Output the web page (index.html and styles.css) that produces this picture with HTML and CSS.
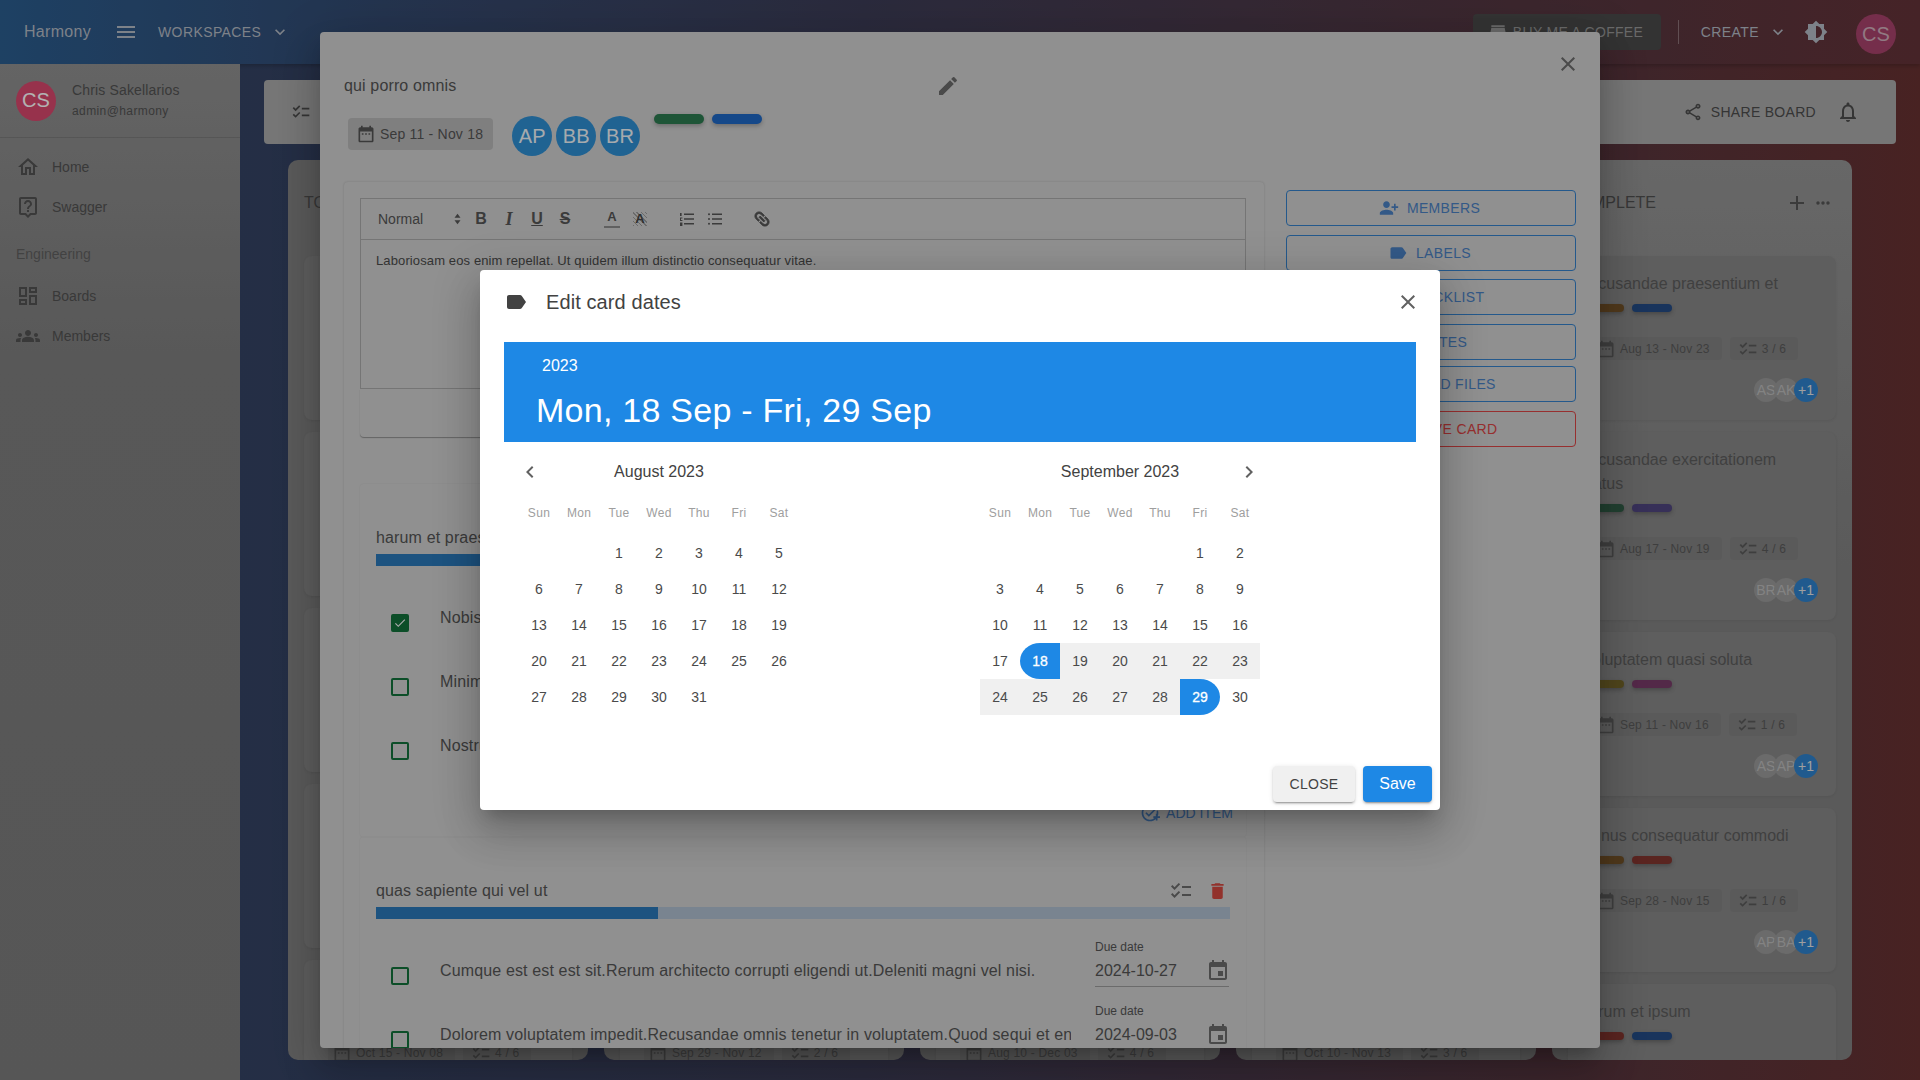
FILE: index.html
```html
<!DOCTYPE html>
<html lang="en">
<head>
    <meta charset="UTF-8">
    <title>Harmony</title>
    <link rel="stylesheet" href="styles.css">
</head>
<body>
    <!-- Shared icons -->
    <svg class="sprite" xmlns="http://www.w3.org/2000/svg">
        <symbol id="i-close" viewBox="0 0 24 24"><path d="M19 6.41 17.59 5 12 10.59 6.41 5 5 6.41 10.59 12 5 17.59 6.41 19 12 13.41 17.59 19 19 17.59 13.41 12z"/></symbol>
        <symbol id="i-menu" viewBox="0 0 24 24"><path d="M3 18h18v-2H3v2zm0-5h18v-2H3v2zm0-7v2h18V6H3z"/></symbol>
        <symbol id="i-down" viewBox="0 0 24 24"><path d="M16.59 8.59 12 13.17 7.41 8.59 6 10l6 6 6-6z"/></symbol>
        <symbol id="i-left" viewBox="0 0 24 24"><path d="M15.41 7.41 14 6l-6 6 6 6 1.41-1.41L10.83 12z"/></symbol>
        <symbol id="i-right" viewBox="0 0 24 24"><path d="M10 6 8.59 7.41 13.17 12l-4.58 4.59L10 18l6-6z"/></symbol>
        <symbol id="i-label" viewBox="0 0 24 24"><path d="M17.63 5.84C17.27 5.33 16.67 5 16 5L5 5.01C3.9 5.01 3 5.9 3 7v10c0 1.1.9 1.99 2 1.99L16 19c.67 0 1.27-.33 1.63-.84L22 12l-4.37-6.16z"/></symbol>
        <symbol id="i-edit" viewBox="0 0 24 24"><path d="M3 17.25V21h3.75L17.81 9.94l-3.75-3.75L3 17.25zM20.71 7.04c.39-.39.39-1.02 0-1.41l-2.34-2.34a.9959.9959 0 0 0-1.41 0l-1.83 1.83 3.75 3.75 1.83-1.83z"/></symbol>
        <symbol id="i-range" viewBox="0 0 24 24"><path d="M9 11H7v2h2v-2zm4 0h-2v2h2v-2zm4 0h-2v2h2v-2zm2-7h-1V2h-2v2H8V2H6v2H5c-1.11 0-1.99.9-1.99 2L3 20c0 1.1.89 2 2 2h14c1.1 0 2-.9 2-2V6c0-1.1-.9-2-2-2zm0 16H5V9h14v11z"/></symbol>
        <symbol id="i-event" viewBox="0 0 24 24"><path d="M17 12h-5v5h5v-5zM16 1v2H8V1H6v2H5c-1.11 0-1.99.9-1.99 2L3 19c0 1.1.89 2 2 2h14c1.1 0 2-.9 2-2V5c0-1.1-.9-2-2-2h-1V1h-2zm3 18H5V8h14v11z"/></symbol>
        <symbol id="i-checklist" viewBox="0 0 24 24"><path d="M22 7h-9v2h9V7zm0 8h-9v2h9v-2zM5.54 11 2 7.46l1.41-1.41 2.12 2.12 4.24-4.24 1.41 1.41L5.54 11zm0 8L2 15.46l1.41-1.41 2.12 2.12 4.24-4.24 1.41 1.41L5.54 19z"/></symbol>
        <symbol id="i-delete" viewBox="0 0 24 24"><path d="M6 19c0 1.1.9 2 2 2h8c1.1 0 2-.9 2-2V7H6v12zM19 4h-3.5l-1-1h-5l-1 1H5v2h14V4z"/></symbol>
        <symbol id="i-home" viewBox="0 0 24 24"><path d="M12 5.69l5 4.5V18h-2v-6H9v6H7v-7.81l5-4.5M12 3 2 12h3v8h6v-6h2v6h6v-8h3L12 3z"/></symbol>
        <symbol id="i-help" viewBox="0 0 24 24"><path d="M19 2H5c-1.11 0-2 .9-2 2v14c0 1.1.89 2 2 2h4l3 3 3-3h4c1.1 0 2-.9 2-2V4c0-1.1-.9-2-2-2zm0 16h-4.83l-.59.59L12 20.17l-1.59-1.59-.58-.58H5V4h14v14zm-8-3h2v2h-2zm1-8c1.1 0 2 .9 2 2 0 2-3 1.75-3 5h2c0-2.25 3-2.5 3-5 0-2.21-1.79-4-4-4S8 6.79 8 9h2c0-1.1.9-2 2-2z"/></symbol>
        <symbol id="i-boards" viewBox="0 0 24 24"><path d="M19 5v2h-4V5h4M9 5v6H5V5h4m10 8v6h-4v-6h4M9 17v2H5v-2h4M21 3h-8v6h8V3zM11 3H3v10h8V3zm10 8h-8v10h8V11zm-10 4H3v6h8v-6z"/></symbol>
        <symbol id="i-groups" viewBox="0 0 24 24"><path d="M12 12.75c1.63 0 3.07.39 4.24.9 1.08.48 1.76 1.56 1.76 2.73V18H6v-1.61c0-1.18.68-2.26 1.76-2.73 1.17-.52 2.61-.91 4.24-.91zM4 13c1.1 0 2-.9 2-2s-.9-2-2-2-2 .9-2 2 .9 2 2 2zm1.13 1.1c-.37-.06-.74-.1-1.13-.1-.99 0-1.93.21-2.78.58C.48 14.9 0 15.62 0 16.43V18h4.5v-1.61c0-.83.23-1.61.63-2.29zM20 13c1.1 0 2-.9 2-2s-.9-2-2-2-2 .9-2 2 .9 2 2 2zm4 3.43c0-.81-.48-1.53-1.22-1.85-.85-.37-1.79-.58-2.78-.58-.39 0-.76.04-1.13.1.4.68.63 1.46.63 2.29V18H24v-1.57zM12 6c1.66 0 3 1.34 3 3s-1.34 3-3 3-3-1.34-3-3 1.34-3 3-3z"/></symbol>
        <symbol id="i-brightness" viewBox="0 0 24 24"><path d="M20 15.31 23.31 12 20 8.69V4h-4.69L12 .69 8.69 4H4v4.69L.69 12 4 15.31V20h4.69L12 23.31 15.31 20H20v-4.69zM12 18V6c3.31 0 6 2.69 6 6s-2.69 6-6 6z"/></symbol>
        <symbol id="i-store" viewBox="0 0 24 24"><path d="M20 4H4v2h16V4zm1 10v-2l-1-5H4l-1 5v2h1v6h10v-6h4v6h2v-6h1zm-9 4H6v-4h6v4z"/></symbol>
        <symbol id="i-share" viewBox="0 0 24 24"><path d="M18 16.08c-.76 0-1.44.3-1.96.77L8.91 12.7c.05-.23.09-.46.09-.7s-.04-.47-.09-.7l7.05-4.11c.54.5 1.25.81 2.04.81 1.66 0 3-1.34 3-3s-1.34-3-3-3-3 1.34-3 3c0 .24.04.47.09.7L8.04 9.81C7.5 9.31 6.79 9 6 9c-1.66 0-3 1.34-3 3s1.34 3 3 3c.79 0 1.5-.31 2.04-.81l7.12 4.16c-.05.21-.08.43-.08.65 0 1.61 1.31 2.92 2.92 2.92s2.92-1.31 2.92-2.92c0-1.61-1.31-2.92-2.92-2.92zM18 4c.55 0 1 .45 1 1s-.45 1-1 1-1-.45-1-1 .45-1 1-1zM6 13c-.55 0-1-.45-1-1s.45-1 1-1 1 .45 1 1-.45 1-1 1zm12 7.02c-.55 0-1-.45-1-1s.45-1 1-1 1 .45 1 1-.45 1-1 1z"/></symbol>
        <symbol id="i-bell" viewBox="0 0 24 24"><path d="M12 22c1.1 0 2-.9 2-2h-4c0 1.1.9 2 2 2zm6-6v-5c0-3.07-1.63-5.64-4.5-6.32V4c0-.83-.67-1.5-1.5-1.5s-1.5.67-1.5 1.5v.68C7.64 5.36 6 7.92 6 11v5l-2 2v1h16v-1l-2-2zm-2 1H8v-6c0-2.48 1.51-4.5 4-4.5s4 2.02 4 4.5v6z"/></symbol>
        <symbol id="i-plus" viewBox="0 0 24 24"><path d="M19 13h-6v6h-2v-6H5v-2h6V5h2v6h6v2z"/></symbol>
        <symbol id="i-more" viewBox="0 0 24 24"><path d="M6 10c-1.1 0-2 .9-2 2s.9 2 2 2 2-.9 2-2-.9-2-2-2zm12 0c-1.1 0-2 .9-2 2s.9 2 2 2 2-.9 2-2-.9-2-2-2zm-6 0c-1.1 0-2 .9-2 2s.9 2 2 2 2-.9 2-2-.9-2-2-2z"/></symbol>
        <symbol id="i-person-add" viewBox="0 0 24 24"><path transform="matrix(-1 0 0 1 24 0)" d="M15 12c2.21 0 4-1.79 4-4s-1.79-4-4-4-4 1.79-4 4 1.79 4 4 4zm-9-2V7H4v3H1v2h3v3h2v-3h3v-2H6zm9 4c-2.67 0-8 1.34-8 4v2h16v-2c0-2.66-5.33-4-8-4z"/></symbol>
        <symbol id="i-add-task" viewBox="0 0 24 24"><path d="M22 5.18 10.59 16.6l-4.24-4.24 1.41-1.41 2.83 2.83 10-10L22 5.18zm-2.21 5.04c.13.57.21 1.17.21 1.78 0 4.42-3.58 8-8 8s-8-3.58-8-8 3.58-8 8-8c1.58 0 3.04.46 4.28 1.25l1.44-1.44C16.1 2.67 14.13 2 12 2 6.48 2 2 6.48 2 12s4.48 10 10 10 10-4.48 10-10c0-1.19-.22-2.33-.6-3.39l-1.61 1.61zM19 16h-3v2h3v3h2v-3h3v-2h-3v-3h-2v3z"/></symbol>
        <symbol id="i-tick" viewBox="0 0 24 24"><path d="M9 16.17 4.83 12l-1.42 1.41L9 19 21 7l-1.41-1.41z"/></symbol>
    </svg>

    <div class="app">
        <!-- Top bar -->
        <header class="topbar">
            <span class="brand">Harmony</span>
            <svg class="icon topbar-menu"><use href="#i-menu"/></svg>
            <span class="topbar-link">Workspaces</span>
            <svg class="icon icon-sm topbar-caret"><use href="#i-down"/></svg>
            <div class="topbar-right">
                <div class="coffee">
                    <svg class="icon icon-sm"><use href="#i-store"/></svg>
                    <span>Buy me a coffee</span>
                </div>
                <span class="topbar-divider"></span>
                <span class="topbar-link">Create</span>
                <svg class="icon icon-sm topbar-caret"><use href="#i-down"/></svg>
                <svg class="icon topbar-theme"><use href="#i-brightness"/></svg>
                <span class="avatar avatar-user avatar-user-dim">CS</span>
            </div>
        </header>

        <div class="layout">
            <!-- Sidebar -->
            <aside class="sidebar">
                <div class="user">
                    <span class="avatar avatar-user">CS</span>
                    <div>
                        <div class="user-name">Chris Sakellarios</div>
                        <div class="user-mail">admin@harmony</div>
                    </div>
                </div>
                <nav class="side-nav">
                    <a class="side-link"><svg class="icon"><use href="#i-home"/></svg>Home</a>
                    <a class="side-link"><svg class="icon"><use href="#i-help"/></svg>Swagger</a>
                    <div class="side-title">Engineering</div>
                    <a class="side-link"><svg class="icon"><use href="#i-boards"/></svg>Boards</a>
                    <a class="side-link"><svg class="icon"><use href="#i-groups"/></svg>Members</a>
                </nav>
            </aside>

            <!-- Board -->
            <main class="main">
                <div class="board-bar">
                    <svg class="icon board-bar-icon"><use href="#i-checklist"/></svg>
                    <div class="board-bar-right">
                        <svg class="icon icon-sm"><use href="#i-share"/></svg>
                        <span class="board-share">Share board</span>
                        <svg class="icon board-bell"><use href="#i-bell"/></svg>
                    </div>
                </div>

                <div class="board">
                    <section class="column">
                        <div class="column-head"><span>TODO</span></div>
                        <div class="card"></div>
                        <div class="card"></div>
                        <div class="card"></div>
                        <div class="card"></div>
                        <div class="card card-tail">
                            <div class="chips">
                                <span class="chip chip-date"><svg class="icon icon-sm"><use href="#i-range"/></svg>Oct 15 - Nov 08</span>
                                <span class="chip chip-todo"><svg class="icon icon-sm"><use href="#i-checklist"/></svg>4 / 6</span>
                            </div>
                        </div>
                    </section>
                    <section class="column">
                        <div class="column-head"></div>
                        <div class="card"></div>
                        <div class="card"></div>
                        <div class="card"></div>
                        <div class="card"></div>
                        <div class="card card-tail">
                            <div class="chips">
                                <span class="chip chip-date"><svg class="icon icon-sm"><use href="#i-range"/></svg>Sep 29 - Nov 12</span>
                                <span class="chip chip-todo"><svg class="icon icon-sm"><use href="#i-checklist"/></svg>2 / 6</span>
                            </div>
                        </div>
                    </section>
                    <section class="column">
                        <div class="column-head"></div>
                        <div class="card"></div>
                        <div class="card"></div>
                        <div class="card"></div>
                        <div class="card"></div>
                        <div class="card card-tail">
                            <div class="chips">
                                <span class="chip chip-date"><svg class="icon icon-sm"><use href="#i-range"/></svg>Aug 10 - Dec 03</span>
                                <span class="chip chip-todo"><svg class="icon icon-sm"><use href="#i-checklist"/></svg>4 / 6</span>
                            </div>
                        </div>
                    </section>
                    <section class="column">
                        <div class="column-head"></div>
                        <div class="card"></div>
                        <div class="card"></div>
                        <div class="card"></div>
                        <div class="card"></div>
                        <div class="card card-tail">
                            <div class="chips">
                                <span class="chip chip-date"><svg class="icon icon-sm"><use href="#i-range"/></svg>Oct 10 - Nov 13</span>
                                <span class="chip chip-todo"><svg class="icon icon-sm"><use href="#i-checklist"/></svg>3 / 6</span>
                            </div>
                        </div>
                    </section>
                    <section class="column column-last">
                        <div class="column-head">
                            <span>COMPLETE</span>
                            <div class="column-tools">
                                <svg class="icon"><use href="#i-plus"/></svg>
                                <svg class="icon icon-sm"><use href="#i-more"/></svg>
                            </div>
                        </div>

                        <article class="card">
                            <div class="card-title">recusandae praesentium et</div>
                            <div class="pills"><span class="pill pill-brown"></span><span class="pill pill-blue"></span></div>
                            <div class="chips">
                                <span class="chip chip-date"><svg class="icon icon-sm"><use href="#i-range"/></svg>Aug 13 - Nov 23</span>
                                <span class="chip chip-todo"><svg class="icon icon-sm"><use href="#i-checklist"/></svg>3 / 6</span>
                            </div>
                            <div class="faces"><span class="face face-more">+1</span><span class="face">AK</span><span class="face">AS</span></div>
                        </article>
                        <article class="card">
                            <div class="card-title">recusandae exercitationem natus</div>
                            <div class="pills"><span class="pill pill-green"></span><span class="pill pill-purple"></span></div>
                            <div class="chips">
                                <span class="chip chip-date"><svg class="icon icon-sm"><use href="#i-range"/></svg>Aug 17 - Nov 19</span>
                                <span class="chip chip-todo"><svg class="icon icon-sm"><use href="#i-checklist"/></svg>4 / 6</span>
                            </div>
                            <div class="faces"><span class="face face-more">+1</span><span class="face">AK</span><span class="face">BR</span></div>
                        </article>
                        <article class="card">
                            <div class="card-title">voluptatem quasi soluta</div>
                            <div class="pills"><span class="pill pill-olive"></span><span class="pill pill-magenta"></span></div>
                            <div class="chips">
                                <span class="chip chip-date"><svg class="icon icon-sm"><use href="#i-range"/></svg>Sep 11 - Nov 16</span>
                                <span class="chip chip-todo"><svg class="icon icon-sm"><use href="#i-checklist"/></svg>1 / 6</span>
                            </div>
                            <div class="faces"><span class="face face-more">+1</span><span class="face">AP</span><span class="face">AS</span></div>
                        </article>
                        <article class="card">
                            <div class="card-title">minus consequatur commodi</div>
                            <div class="pills"><span class="pill pill-brown"></span><span class="pill pill-red"></span></div>
                            <div class="chips">
                                <span class="chip chip-date"><svg class="icon icon-sm"><use href="#i-range"/></svg>Sep 28 - Nov 15</span>
                                <span class="chip chip-todo"><svg class="icon icon-sm"><use href="#i-checklist"/></svg>1 / 6</span>
                            </div>
                            <div class="faces"><span class="face face-more">+1</span><span class="face">BA</span><span class="face">AP</span></div>
                        </article>
                        <article class="card">
                            <div class="card-title">rerum et ipsum</div>
                            <div class="pills"><span class="pill pill-red"></span><span class="pill pill-blue"></span></div>
                        </article>
                    </section>
                </div>
            </main>
        </div>
    </div>

    <!-- Card details dialog -->
    <div class="card-modal">
        <svg class="icon modal-x"><use href="#i-close"/></svg>
        <div class="modal-title">
            <span>qui porro omnis</span>
            <svg class="icon"><use href="#i-edit"/></svg>
        </div>
        <div class="modal-meta">
            <span class="meta-date"><svg class="icon icon-sm"><use href="#i-range"/></svg>Sep 11 - Nov 18</span>
            <div class="meta-people">
                <span class="avatar avatar-member">AP</span>
                <span class="avatar avatar-member">BB</span>
                <span class="avatar avatar-member">BR</span>
            </div>
            <div class="meta-pills"><span class="meta-pill meta-pill-green"></span><span class="meta-pill meta-pill-blue"></span></div>
        </div>

        <div class="modal-body">
            <div class="details">
                <div class="editor">
                    <div class="toolbar">
                        <span class="tool-picker">Normal
                            <svg class="tool-arrows" viewBox="0 0 8 14"><polygon points="4,1 7.5,5.5 .5,5.5"/><polygon points="4,13 7.5,8.5 .5,8.5"/></svg>
                        </span>
                        <b class="tool">B</b>
                        <i class="tool tool-serif">I</i>
                        <u class="tool">U</u>
                        <s class="tool">S</s>
                        <span class="tool tool-gap tool-color">A</span>
                        <span class="tool tool-fill"><b>A</b></span>
                        <span class="tool tool-gap">
                            <svg class="tool-svg" viewBox="0 0 16 16"><path d="M5 2.5h10v1.6H5zM5 7.2h10v1.6H5zM5 11.9h10v1.6H5zM1 2h1.6v3H1zM1 6.5h2.4v1H2V9h1.4v1H1zM1 11.500h2.400v3.500H1z"/></svg>
                        </span>
                        <span class="tool">
                            <svg class="tool-svg" viewBox="0 0 16 16"><path d="M5 2.5h10v1.6H5zM5 7.2h10v1.6H5zM5 11.900h10v1.600H5z"/><circle cx="2" cy="3.300" r="1"/><circle cx="2" cy="8" r="1"/><circle cx="2" cy="12.700" r="1"/></svg>
                        </span>
                        <span class="tool tool-gap">
                            <svg class="tool-svg tool-link" viewBox="0 0 24 24"><path d="M3.9 12c0-1.710 1.390-3.100 3.100-3.100h4V7H7c-2.760 0-5 2.240-5 5s2.240 5 5 5h4v-1.900H7c-1.710 0-3.100-1.390-3.100-3.100zM8 13h8v-2H8v2zm9-6h-4v1.900h4c1.710 0 3.100 1.390 3.100 3.100s-1.390 3.100-3.100 3.100h-4V17h4c2.760 0 5-2.240 5-5s-2.240-5-5-5z" transform="rotate(45 12 12)"/></svg>
                        </span>
                    </div>
                    <div class="editor-text">Laboriosam eos enim repellat. Ut quidem illum distinctio consequatur vitae.</div>
                </div>
                <div class="editor-foot"></div>

                <section class="checklist">
                    <div class="checklist-head"><span>harum et praesentium</span></div>
                    <div class="progress"><div class="progress-fill" style="width: 33%"></div></div>
                    <div class="todo">
                        <span class="box box-on"><svg class="icon"><use href="#i-tick"/></svg></span>
                        <span class="todo-text">Nobis</span>
                    </div>
                    <div class="todo">
                        <span class="box"></span>
                        <span class="todo-text">Minima</span>
                    </div>
                    <div class="todo">
                        <span class="box"></span>
                        <span class="todo-text">Nostrum</span>
                    </div>
                    <div class="add-item"><svg class="icon icon-sm"><use href="#i-add-task"/></svg>Add item</div>
                </section>

                <section class="checklist">
                    <div class="checklist-head">
                        <span>quas sapiente qui vel ut</span>
                        <div class="checklist-tools">
                            <svg class="icon"><use href="#i-checklist"/></svg>
                            <svg class="icon icon-red icon-trash"><use href="#i-delete"/></svg>
                        </div>
                    </div>
                    <div class="progress"><div class="progress-fill" style="width: 33%"></div></div>
                    <div class="todo">
                        <span class="box"></span>
                        <span class="todo-text">Cumque est est est sit.Rerum architecto corrupti eligendi ut.Deleniti magni vel nisi.</span>
                        <div class="due">
                            <div class="due-label">Due date</div>
                            <div class="due-value">2024-10-27<svg class="icon"><use href="#i-event"/></svg></div>
                        </div>
                    </div>
                    <div class="todo">
                        <span class="box"></span>
                        <span class="todo-text">Dolorem voluptatem impedit.Recusandae omnis tenetur in voluptatem.Quod sequi et enim</span>
                        <div class="due">
                            <div class="due-label">Due date</div>
                            <div class="due-value">2024-09-03<svg class="icon"><use href="#i-event"/></svg></div>
                        </div>
                    </div>
                </section>
            </div>

            <div class="actions">
                <div class="action"><svg class="icon icon-sm"><use href="#i-person-add"/></svg>Members</div>
                <div class="action"><svg class="icon icon-sm"><use href="#i-label"/></svg>Labels</div>
                <div class="action"><svg class="icon icon-sm"><use href="#i-checklist"/></svg>Checklist</div>
                <div class="action"><svg class="icon icon-sm"><use href="#i-range"/></svg>Dates</div>
                <div class="action action-files"><svg class="icon icon-sm"><use href="#i-add-task"/></svg>Upload files</div>
                <div class="action action-danger"><svg class="icon icon-sm"><use href="#i-delete"/></svg>Remove card</div>
            </div>
        </div>
    </div>

    <div class="backdrop"></div>

    <!-- Date range dialog -->
    <div class="date-modal">
        <div class="date-head">
            <svg class="icon"><use href="#i-label"/></svg>
            <span class="date-title">Edit card dates</span>
            <svg class="icon date-x"><use href="#i-close"/></svg>
        </div>
        <div class="date-banner">
            <div class="date-year">2023</div>
            <div class="date-range">Mon, 18 Sep - Fri, 29 Sep</div>
        </div>
        <div class="months">
            <div class="month">
                <div class="month-head">
                    <svg class="icon month-prev"><use href="#i-left"/></svg>
                    <span>August 2023</span>
                    <span></span>
                </div>
                <div class="weekdays"><span>Sun</span><span>Mon</span><span>Tue</span><span>Wed</span><span>Thu</span><span>Fri</span><span>Sat</span></div>
                <div class="days">
                    <span class="day"></span><span class="day"></span><span class="day">1</span><span class="day">2</span><span class="day">3</span><span class="day">4</span><span class="day">5</span>
                    <span class="day">6</span><span class="day">7</span><span class="day">8</span><span class="day">9</span><span class="day">10</span><span class="day">11</span><span class="day">12</span>
                    <span class="day">13</span><span class="day">14</span><span class="day">15</span><span class="day">16</span><span class="day">17</span><span class="day">18</span><span class="day">19</span>
                    <span class="day">20</span><span class="day">21</span><span class="day">22</span><span class="day">23</span><span class="day">24</span><span class="day">25</span><span class="day">26</span>
                    <span class="day">27</span><span class="day">28</span><span class="day">29</span><span class="day">30</span><span class="day">31</span>
                </div>
            </div>
            <div class="month">
                <div class="month-head">
                    <span></span>
                    <span>September 2023</span>
                    <svg class="icon month-next"><use href="#i-right"/></svg>
                </div>
                <div class="weekdays"><span>Sun</span><span>Mon</span><span>Tue</span><span>Wed</span><span>Thu</span><span>Fri</span><span>Sat</span></div>
                <div class="days">
                    <span class="day"></span><span class="day"></span><span class="day"></span><span class="day"></span><span class="day"></span><span class="day">1</span><span class="day">2</span>
                    <span class="day">3</span><span class="day">4</span><span class="day">5</span><span class="day">6</span><span class="day">7</span><span class="day">8</span><span class="day">9</span>
                    <span class="day">10</span><span class="day">11</span><span class="day">12</span><span class="day">13</span><span class="day">14</span><span class="day">15</span><span class="day">16</span>
                    <span class="day">17</span><span class="day day-start">18</span><span class="day day-in">19</span><span class="day day-in">20</span><span class="day day-in">21</span><span class="day day-in">22</span><span class="day day-in">23</span>
                    <span class="day day-in">24</span><span class="day day-in">25</span><span class="day day-in">26</span><span class="day day-in">27</span><span class="day day-in">28</span><span class="day day-end">29</span><span class="day">30</span>
                </div>
            </div>
        </div>
        <div class="date-actions">
            <button class="btn btn-close">Close</button>
            <button class="btn btn-save">Save</button>
        </div>
    </div>
</body>
</html>
```

FILE: styles.css
```css
* {
    box-sizing: border-box;
}
html, body {
    margin: 0;
    height: 100%;
    overflow: hidden;
}
body {
    font-family: "Liberation Sans", Arial, sans-serif;
    font-size: 14px;
    color: #4e4e4e;
}
.sprite {
    display: none;
}
.icon {
    width: 24px;
    height: 24px;
    flex: none;
    fill: currentColor;
}
.icon-sm {
    width: 20px;
    height: 20px;
}
.icon-red {
    color: #d24840;
}
.icon-trash {
    width: 21px;
}
.avatar {
    display: flex;
    align-items: center;
    justify-content: center;
    flex: none;
    width: 40px;
    height: 40px;
    border-radius: 50%;
    color: #fff;
    font-size: 20px;
}

/* Page behind the dialogs */
.app {
    height: 1080px;
    background: linear-gradient(90deg, #314567 0%, #364262 20%, #3d3d57 45%, #553640 80%, #673232 100%);
}
.topbar {
    display: flex;
    align-items: center;
    height: 64px;
    padding: 0 24px;
    color: #b4bac4;
    background: linear-gradient(90deg, #2b5d8f 0%, #344a70 20%, #3d3d57 45%, #553640 80%, #643339 100%);
    box-shadow: 0 2px 4px rgba(0, 0, 0, 0.2);
}
.brand {
    width: 90px;
    font-size: 16px;
    letter-spacing: 0.3px;
}
.topbar-menu {
    margin-right: 20px;
}
.topbar-link {
    font-size: 14px;
    text-transform: uppercase;
    letter-spacing: 0.4px;
}
.topbar-caret {
    margin-left: 9px;
}
.topbar-right {
    display: flex;
    align-items: center;
    margin-left: auto;
}
.coffee {
    display: flex;
    align-items: center;
    gap: 5px;
    width: 188px;
    height: 36px;
    padding-left: 15px;
    margin-right: 17px;
    border-radius: 4px;
    background: #4a4a4a;
    color: #989898;
    letter-spacing: 0.3px;
    text-transform: uppercase;
}
.topbar-divider {
    width: 1px;
    height: 24px;
    margin-right: 22px;
    background: rgba(255, 255, 255, 0.3);
}
.topbar-theme {
    margin: 0 28px 0 16px;
}
.avatar-user {
    background: #d8486e;
}
.avatar-user-dim {
    background: #a8436c;
    color: #d0aebb;
    margin-top: 4px;
}

.layout {
    display: flex;
    height: 1016px;
}
.sidebar {
    width: 240px;
    flex: none;
    background: linear-gradient(#909090, #7e7e7e 30%, #7c7c7c);
    color: #525252;
}
.user {
    display: flex;
    align-items: center;
    gap: 16px;
    height: 74px;
    padding-left: 16px;
    border-bottom: 1px solid rgba(0, 0, 0, 0.12);
}
.user-name {
    letter-spacing: 0.15px;
    margin-top: -2px;
}
.user-mail {
    margin-top: 6px;
    font-size: 12px;
    letter-spacing: 0.4px;
}
.side-nav {
    padding-top: 9px;
}
.side-link {
    display: flex;
    align-items: center;
    gap: 12px;
    height: 40px;
    padding-left: 16px;
}
.side-title {
    height: 49px;
    padding: 19px 0 0 16px;
    color: #5f5f5f;
}

.main {
    flex: 1;
    min-width: 0;
    padding: 16px 0 0 24px;
}
.board-bar {
    display: flex;
    align-items: center;
    height: 64px;
    width: 1632px;
    padding: 0 36px 0 27px;
    border-radius: 4px;
    background: #aaaaaa;
    color: #4c4c4c;
}
.board-bar-icon {
    width: 20px;
    height: 20px;
}
.board-bar-right {
    display: flex;
    align-items: center;
    margin-left: auto;
}
.board-share {
    margin: 0 20px 0 8px;
    text-transform: uppercase;
    letter-spacing: 0.3px;
}
.board {
    display: flex;
    gap: 16px;
    height: 900px;
    margin: 16px 0 0 24px;
}
.column {
    display: flex;
    flex-direction: column;
    gap: 12px;
    width: 300px;
    flex: none;
    padding: 0 16px;
    overflow: hidden;
    border-radius: 10px;
    background: #828282;
}
.column-last {
    background: linear-gradient(#949494, #828282 45%);
}
.column-head {
    display: flex;
    align-items: center;
    justify-content: space-between;
    flex: none;
    height: 84px;
    padding-top: 2px;
    font-size: 16px;
    color: #505050;
}
.column-tools {
    display: flex;
    align-items: center;
    gap: 4px;
    margin-right: 3px;
    color: #555;
}
.card {
    flex: none;
    min-height: 164px;
    padding: 16px 18px 18px 16px;
    border-radius: 8px;
    background: #878787;
    box-shadow: 0 1px 3px rgba(0, 0, 0, 0.08);
}
.card-tail {
    padding-top: 81px;
}
.card-title {
    font-size: 16px;
    line-height: 24px;
    color: #5c5c5c;
}
.pills {
    display: flex;
    gap: 8px;
    margin-top: 8px;
}
.pill {
    width: 40px;
    height: 8px;
    border-radius: 4px;
    box-shadow: 0 2px 4px rgba(0, 0, 0, 0.25);
}
.pill-brown { background: #735228; }
.pill-blue { background: #244b85; }
.pill-green { background: #305c46; }
.pill-purple { background: #4f457e; }
.pill-olive { background: #736429; }
.pill-magenta { background: #783b68; }
.pill-red { background: #82352f; }
.chips {
    display: flex;
    gap: 8px;
    margin: 25px 0 0 8px;
}
.card-tail .chips {
    margin-top: 0;
}
.chip {
    display: flex;
    align-items: center;
    height: 23px;
    border-radius: 4px;
    font-size: 12px;
    color: #5a5a5a;
    background: rgba(0, 0, 0, 0.04);
    letter-spacing: 0.2px;
    white-space: nowrap;
}
.chip-date {
    gap: 4px;
    padding: 0 12px 0 4px;
}
.chip-todo {
    gap: 4px;
    padding: 0 12px 0 8px;
}
.faces {
    display: flex;
    flex-direction: row-reverse;
    margin-top: 18px;
}
.face {
    display: flex;
    align-items: center;
    justify-content: center;
    width: 24px;
    height: 24px;
    margin-left: -4px;
    border-radius: 50%;
    background: #9a9a9a;
    color: #bcbcbc;
    font-size: 14px;
}
.face-more {
    background: #2f82cc;
    color: #e4e4e4;
}

/* Card details dialog */
.card-modal {
    position: absolute;
    left: 320px;
    top: 32px;
    width: 1280px;
    height: 1016px;
    padding: 42px 24px 0;
    overflow: hidden;
    border-radius: 4px;
    background: #cecece;
    box-shadow: 0 11px 15px -7px rgba(0, 0, 0, 0.2), 0 24px 38px 3px rgba(0, 0, 0, 0.14), 0 9px 46px 8px rgba(0, 0, 0, 0.12);
    font-size: 16px;
    letter-spacing: 0.14px;
    color: #545454;
}
.modal-x {
    position: absolute;
    top: 20px;
    right: 20px;
    color: #6a6a6a;
}
.modal-title {
    display: flex;
    align-items: center;
    justify-content: space-between;
    width: 616px;
    height: 24px;
}
.modal-title .icon {
    color: #6a6a6a;
}
.modal-meta {
    display: flex;
    align-items: flex-start;
    height: 40px;
    margin-top: 18px;
}
.meta-date {
    display: flex;
    align-items: center;
    gap: 4px;
    height: 32px;
    margin: 2px 0 0 4px;
    padding: 0 10px 0 8px;
    border-radius: 4px;
    background: #b7b7b7;
    font-size: 14px;
    letter-spacing: 0.2px;
}
.meta-people {
    display: flex;
    gap: 4px;
    margin-left: 19px;
}
.avatar-member {
    background: #2e8ed2;
    color: #eef4f8;
}
.meta-pills {
    display: flex;
    gap: 8px;
    margin: -2px 0 0 14px;
}
.meta-pill {
    width: 50px;
    height: 10px;
    border-radius: 5px;
    box-shadow: 0 2px 4px rgba(0, 0, 0, 0.25);
}
.meta-pill-green { background: #2b7a50; }
.meta-pill-blue { background: #1f68c4; }

.modal-body {
    display: grid;
    grid-template-columns: 920px 290px;
    gap: 22px;
    margin-top: 26px;
}
.details {
    padding: 16px 18px 0 16px;
    border-radius: 4px;
    box-shadow: 0 0 2px rgba(0, 0, 0, 0.18);
}
.editor {
    height: 191px;
    border: 1px solid #a8a8a8;
    font-size: 13px;
    letter-spacing: 0;
}
.toolbar {
    display: flex;
    align-items: center;
    height: 41px;
    padding-left: 17px;
    border-bottom: 1px solid #a8a8a8;
    color: #555;
}
.tool-picker {
    display: flex;
    align-items: center;
    justify-content: space-between;
    width: 89px;
    padding-right: 6px;
    font-size: 14px;
}
.tool-arrows {
    width: 7px;
    height: 12px;
    fill: currentColor;
}
.tool {
    display: flex;
    align-items: center;
    justify-content: center;
    width: 28px;
    height: 24px;
    font-size: 16px;
    font-weight: bold;
}
.tool-serif {
    font-family: "Liberation Serif", serif;
    font-size: 18px;
}
.tool-gap {
    margin-left: 19px;
}
.tool-color {
    font-size: 13px;
    line-height: 14px;
    height: 18px;
    align-items: flex-start;
    background: linear-gradient(#8a8a8a, #8a8a8a) center bottom / 16px 2px no-repeat;
}
.tool-fill b {
    width: 14px;
    height: 14px;
    font-size: 13px;
    line-height: 14px;
    text-align: center;
    color: #444;
    background: repeating-linear-gradient(45deg, #9a9a9a 0 1px, transparent 1px 3px);
}
.tool-svg {
    width: 16px;
    height: 16px;
    fill: currentColor;
}
.tool-link {
    width: 20px;
    height: 20px;
    stroke: currentColor;
    stroke-width: 1;
}
.editor-text {
    padding: 11px 15px;
    line-height: 19px;
    letter-spacing: 0.12px;
    color: #4a4a4a;
}
.editor-foot {
    height: 48px;
    border-radius: 0 0 4px 4px;
    box-shadow: 0 1px 1px rgba(0, 0, 0, 0.3);
}
.checklist {
    height: 353px;
    margin-top: 47px;
    padding: 41px 16px 0;
    border-radius: 4px;
    box-shadow: 0 0 2px rgba(0, 0, 0, 0.06);
}
.checklist + .checklist {
    height: 352px;
    margin-top: 0;
}
.checklist-head {
    display: flex;
    align-items: center;
    justify-content: space-between;
    height: 24px;
    padding-top: 1px;
}
.checklist-tools {
    display: flex;
    align-items: center;
    gap: 14px;
    color: #6a6a6a;
    margin-right: 2px;
}
.progress {
    height: 12px;
    margin: 5px 0 16px;
    background: #aebecf;
}
.checklist + .checklist .progress {
    margin-top: 5px;
}
.progress-fill {
    height: 100%;
    background: #2a78b8;
}
.todo {
    display: flex;
    height: 64px;
    padding-left: 15px;
}
.box {
    display: flex;
    flex: none;
    width: 18px;
    height: 18px;
    margin-top: 32px;
    border: 2px solid #12703a;
    border-radius: 2px;
    color: #f4f4f4;
}
.box-on {
    background: #12703a;
}
.box-on .icon {
    width: 14px;
    height: 14px;
}
.todo-text {
    flex: none;
    width: 631px;
    margin: 25px 24px 0 31px;
    line-height: 22px;
    white-space: nowrap;
    overflow: hidden;
}
.due {
    width: 134px;
    flex: none;
    height: 52px;
    border-bottom: 1px solid #9a9a9a;
    letter-spacing: 0;
}
.due-label {
    font-size: 12px;
    line-height: 24px;
}
.due-value {
    display: flex;
    align-items: center;
    justify-content: space-between;
    height: 24px;
}
.due-value .icon {
    color: #6a6a6a;
    margin-right: -1px;
}
.add-item {
    display: flex;
    align-items: center;
    justify-content: flex-end;
    gap: 6px;
    height: 24px;
    margin: 27px -3px 0 0;
    font-size: 14px;
    letter-spacing: 0;
    text-transform: uppercase;
    color: #4a80c2;
}

.actions {
    display: flex;
    flex-direction: column;
    gap: 8.7px;
    padding-top: 8px;
}
.action {
    display: flex;
    align-items: center;
    justify-content: center;
    gap: 8px;
    height: 36px;
    padding-right: 3px;
    border: 1px solid #3480c9;
    border-radius: 4px;
    font-size: 14px;
    letter-spacing: 0.35px;
    text-transform: uppercase;
    color: #4a80c2;
}
.action-files {
    margin-top: -2.5px;
}
.action-danger {
    border-color: #d84444;
    color: #d84444;
}

/* Date range dialog */
.backdrop {
    position: absolute;
    inset: 0;
    background: rgba(0, 0, 0, 0.3);
}
.date-modal {
    position: absolute;
    left: 480px;
    top: 270px;
    display: flex;
    flex-direction: column;
    width: 960px;
    height: 540px;
    padding: 0 24px 8px;
    border-radius: 4px;
    background: #fff;
    box-shadow: 0 11px 15px -7px rgba(0, 0, 0, 0.2), 0 24px 38px 3px rgba(0, 0, 0, 0.14), 0 9px 46px 8px rgba(0, 0, 0, 0.12);
    color: #424242;
}
.date-head {
    display: flex;
    align-items: center;
    height: 72px;
    padding-bottom: 8px;
    color: #424242;
}
.date-title {
    margin-left: 18px;
    font-size: 20px;
    letter-spacing: 0.1px;
}
.date-x {
    margin: 0 -4px 0 auto;
    color: #616161;
}
.date-banner {
    height: 100px;
    padding-top: 14px;
    background: #1e88e5;
    color: #fff;
}
.date-year {
    margin-left: 38px;
    font-size: 16px;
    line-height: 20px;
}
.date-range {
    margin: 13px 0 0 32px;
    font-size: 34px;
    line-height: 42px;
    letter-spacing: 0.25px;
}
.months {
    display: flex;
    gap: 181px;
    padding: 12px 0 0 15px;
}
.month {
    width: 280px;
}
.month-head {
    display: grid;
    grid-template-columns: 24px 1fr 24px;
    align-items: center;
    height: 36px;
    font-size: 16px;
    text-align: center;
    color: #424242;
}
.month-head .icon {
    color: #616161;
}
.month-prev {
    margin-left: -1px;
}
.month-next {
    margin-left: 1px;
}
.weekdays {
    display: grid;
    grid-template-columns: repeat(7, 40px);
    height: 20px;
    margin-top: 13px;
    font-size: 12px;
    line-height: 20px;
    letter-spacing: 0.3px;
    text-align: center;
    color: #9e9e9e;
}
.days {
    display: grid;
    grid-template-columns: repeat(7, 40px);
    grid-auto-rows: 36px;
    margin-top: 12px;
}
.day {
    display: flex;
    align-items: center;
    justify-content: center;
    font-size: 14px;
    color: #4a4a4a;
}
.day-in {
    background: #f0f0f0;
}
.day-start,
.day-end {
    background: #1e88e5;
    color: #fff;
    -webkit-text-stroke: 0.3px #fff;
}
.day-start {
    border-radius: 50% 0 0 50%;
}
.day-end {
    border-radius: 0 50% 50% 0;
}
.date-actions {
    display: flex;
    justify-content: flex-end;
    gap: 8px;
    margin: auto -16px 0 0;
}
.btn {
    height: 36px;
    padding: 0 16px;
    border: 0;
    border-radius: 4px;
    font-family: inherit;
    box-shadow: 0 3px 1px -2px rgba(0, 0, 0, 0.2), 0 2px 2px 0 rgba(0, 0, 0, 0.14), 0 1px 5px 0 rgba(0, 0, 0, 0.12);
}
.btn-close {
    width: 82px;
    background: #f0f0f0;
    color: #424242;
    font-size: 14px;
    letter-spacing: 0.3px;
    text-transform: uppercase;
}
.btn-save {
    width: 69px;
    background: #1e88e5;
    color: #fff;
    font-size: 16px;
}
```
